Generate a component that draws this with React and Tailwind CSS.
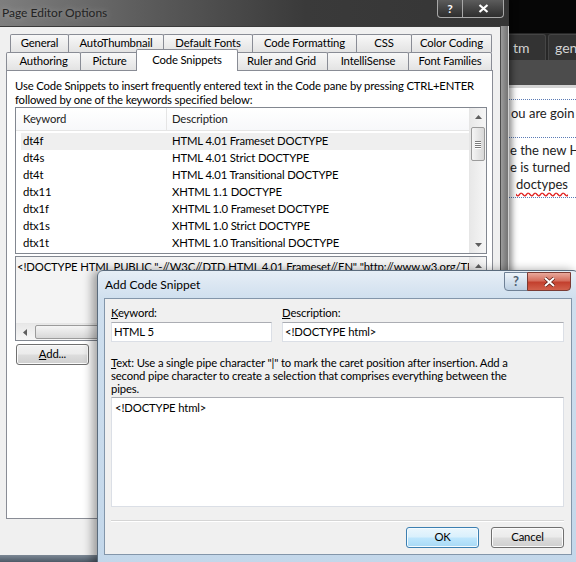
import React from 'react'

// Vista-style "Page Editor Options" with the "Add Code Snippet" dialog on top

const ui = "font-['Lato',sans-serif]"
const btnFace =
  'bg-[linear-gradient(#f2f2f2,#ebebeb_48%,#dddddd_52%,#cfcfcf)] border border-[#707070] rounded-[3px] shadow-[inset_0_0_0_1px_#fbfbfb]'
const btnDefault =
  'bg-[linear-gradient(#eaf6fd,#d9f0fc_48%,#bee6fd_52%,#a7d9f5)] border border-[#3c7fb1] rounded-[3px] shadow-[inset_0_0_0_1px_#f4fbff]'

const rows = [
  ['dt4f', 'HTML 4.01 Frameset DOCTYPE'],
  ['dt4s', 'HTML 4.01 Strict DOCTYPE'],
  ['dt4t', 'HTML 4.01 Transitional DOCTYPE'],
  ['dtx11', 'XHTML 1.1 DOCTYPE'],
  ['dtx1f', 'XHTML 1.0 Frameset DOCTYPE'],
  ['dtx1s', 'XHTML 1.0 Strict DOCTYPE'],
  ['dtx1t', 'XHTML 1.0 Transitional DOCTYPE'],
]

const tabsTop = [
  { label: 'General', w: 'w-[59px]', ml: '' },
  { label: 'AutoThumbnail', w: 'w-[96px]', ml: '-ml-px' },
  { label: 'Default Fonts', w: 'w-[90px]', ml: '-ml-px' },
  { label: 'Code Formatting', w: 'w-[105px]', ml: '-ml-px' },
  { label: 'CSS', w: 'w-[56px]', ml: '-ml-px' },
  { label: 'Color Coding', w: 'w-[81px]', ml: '-ml-px' },
]

const tabsBottom = [
  { label: 'Authoring', w: 'w-[75px]', ml: '' },
  { label: 'Picture', w: 'w-[59px]', ml: '-ml-px' },
  { label: 'Code Snippets', w: 'w-[102px]', ml: '-ml-[3px]', selected: true },
  { label: 'Ruler and Grid', w: 'w-[93px]', ml: '-ml-[3px]' },
  { label: 'IntelliSense', w: 'w-[82px]', ml: '-ml-px' },
  { label: 'Font Families', w: 'w-[84px]', ml: '-ml-px' },
]

function Arrow({ dir }) {
  const horiz = dir === 'left' || dir === 'right'
  const d = {
    up: 'M0 4L3.5 0L7 4Z',
    down: 'M0 0L3.5 4L7 0Z',
    left: 'M4 0L0 3.5L4 7Z',
    right: 'M0 0L4 3.5L0 7Z',
  }[dir]
  return (
    <svg width={horiz ? 4 : 7} height={horiz ? 7 : 4} viewBox={horiz ? '0 0 4 7' : '0 0 7 4'}>
      <path d={d} fill="#5e5e5e" />
    </svg>
  )
}

function Grip({ vertical }) {
  return (
    <div className={vertical ? 'flex flex-col gap-[1px]' : 'flex gap-[1px]'}>
      {[0, 1, 2, 3].map((i) => (
        <div
          key={i}
          className={vertical ? 'w-[6px] h-px bg-[#7a7a7a] shadow-[0_1px_0_#ffffff]' : 'w-px h-[6px] bg-[#7a7a7a] shadow-[1px_0_0_#ffffff]'}
        />
      ))}
    </div>
  )
}

function Tab({ label, w, ml, selected }) {
  if (selected) {
    return (
      <div className={`${w} ${ml} h-[22px] -mb-px relative z-10 bg-white border border-b-0 border-[#898c95] rounded-t-[2px] flex items-center justify-center pb-[1px]`}>
        {label}
      </div>
    )
  }
  return (
    <div className={`${w} ${ml} h-[18px] bg-linear-to-b from-[#f8f8f8] to-[#e3e3e3] border border-b-0 border-[#898c95] rounded-t-[2px] flex items-center justify-center`}>
      {label}
    </div>
  )
}

function Background() {
  return (
    <div className="flex flex-col h-full font-['Lato',sans-serif] tracking-normal">
      <div className="h-[33px] shrink-0 bg-[#060606]" />
      <div className="h-[27px] shrink-0 bg-[#272727] flex items-end pl-[505px] gap-[2px] overflow-hidden">
        <div className="h-[26px] w-[41px] shrink-0 bg-[#333333] border border-b-0 border-[#454545] rounded-t-[3px] text-[#d4d4d4] text-[14px] flex items-center pl-[7px]">
          tm
        </div>
        <div className="h-[26px] w-[60px] shrink-0 bg-[#333333] border border-b-0 border-[#454545] rounded-t-[3px] text-[#d4d4d4] text-[14px] flex items-center pl-[6px]">
          gen
        </div>
      </div>
      <div className="h-[25px] shrink-0 bg-[#4c4c4c]" />
      <div className="h-[3px] shrink-0 bg-[#d4d4d4]" />
      <div className="flex-1 bg-white text-[13px] text-[#222222] pt-[11px] whitespace-nowrap">
        <div className="h-[38px] border-t border-dotted border-[#5b7bb5] pt-[4px] leading-[18px]">
          <div className="ml-[511px]">ou are goin</div>
        </div>
        <div className="h-[61px] border-y border-dotted border-[#5b7bb5] pt-[4px] leading-[17px]">
          <div className="ml-[510px]">e the new H</div>
          <div className="ml-[510px]">e is turned</div>
          <div className="ml-[516px]">
            <span className="underline decoration-wavy decoration-[#e02020] underline-offset-[3px]">doctypes</span>
          </div>
        </div>
      </div>
    </div>
  )
}

function ListScroll() {
  return (
    <div className="w-[17px] shrink-0 flex flex-col bg-linear-to-r from-[#e8e8e8] to-[#f6f6f6] border-l border-[#e6e6e6]">
      <div className="h-[17px] flex items-center justify-center">
        <Arrow dir="up" />
      </div>
      <div className="flex-1 pt-[2px] px-[1px]">
        <div className="h-[34px] rounded-[2px] border border-[#9b9b9b] bg-linear-to-r from-[#f5f5f5] to-[#d8d8d8] flex items-center justify-center">
          <Grip vertical />
        </div>
      </div>
      <div className="h-[17px] flex items-center justify-center">
        <Arrow dir="down" />
      </div>
    </div>
  )
}

function SnippetList() {
  return (
    <div className="ml-[8px] w-[472px] h-[147px] shrink-0 border border-[#828790] bg-white flex">
      <div className="flex-1 flex flex-col">
        <div className="h-[23px] shrink-0 flex border-b border-[#e5e5e5] bg-linear-to-b from-[#ffffff] to-[#f7f8fa] text-[#222222]">
          <div className="w-[151px] border-r border-[#e5e5e5] pl-[7px] flex items-center">Keyword</div>
          <div className="flex-1 pl-[5px] flex items-center">Description</div>
        </div>
        <div className="pt-[2px]">
          {rows.map(([k, d], i) => (
            <div key={k} className={`h-[17px] ml-[5px] flex items-center ${i === 0 ? 'bg-[#efefef]' : ''}`}>
              <div className="w-[151px] pl-[2px]">{k}</div>
              <div className="flex-1">{d}</div>
            </div>
          ))}
        </div>
      </div>
      <ListScroll />
    </div>
  )
}

function Preview() {
  return (
    <div className="mt-[2px] ml-[8px] w-[472px] h-[85px] shrink-0 border border-[#828790] bg-[#f4f4f4] flex flex-col">
      <div className="flex-1 flex min-h-0">
        <div className="flex-1 overflow-hidden whitespace-nowrap pl-[1px] pt-[3px] leading-[14px]">
          {'<!DOCTYPE HTML PUBLIC "-//W3C//DTD HTML 4.01 Frameset//EN" "http://www.w3.org/TR/html4/frameset.dtd">'}
        </div>
        <div className="w-[17px] shrink-0 bg-linear-to-r from-[#e8e8e8] to-[#f6f6f6] border-l border-[#e6e6e6] flex flex-col">
          <div className="h-[17px] flex items-center justify-center">
            <Arrow dir="up" />
          </div>
        </div>
      </div>
      <div className="h-[17px] shrink-0 flex bg-linear-to-b from-[#e8e8e8] to-[#f6f6f6] border-t border-[#e6e6e6]">
        <div className="w-[17px] flex items-center justify-center">
          <Arrow dir="left" />
        </div>
        <div className="ml-[2px] w-[300px] my-[1px] rounded-[2px] border border-[#9b9b9b] bg-linear-to-b from-[#f5f5f5] to-[#d8d8d8] flex items-center justify-center">
          <Grip />
        </div>
        <div className="flex-1" />
        <div className="w-[17px] flex items-center justify-center">
          <Arrow dir="right" />
        </div>
      </div>
    </div>
  )
}

function PageEditorOptions() {
  return (
    <div className="absolute left-0 top-0 w-[509px] h-[562px] flex flex-col shadow-[3px_0_6px_rgba(0,0,0,0.45)]">
      <div className="h-[26px] shrink-0 flex items-start justify-between bg-[linear-gradient(90deg,#7e7e7e,#5a5a5a_30%,#3a3a3a_60%,#353535)]">
        <div className="pl-[2px] pt-[5px] leading-[16px] text-[12px] tracking-normal text-[#232323] [text-shadow:0_0_6px_rgba(255,255,255,0.35)]">
          Page Editor Options
        </div>
        <div className="flex mr-[5px]">
          <div className="w-[26px] h-[18px] border border-t-0 border-[#a8a8a8] rounded-bl-[4px] bg-linear-to-b from-[#5c5c5c] to-[#2e2e2e] flex items-center justify-center text-white text-[12px] font-bold">
            ?
          </div>
          <div className="w-[42px] h-[18px] -ml-px border border-t-0 border-[#a8a8a8] rounded-br-[4px] bg-linear-to-b from-[#5c5c5c] to-[#2e2e2e] flex items-center justify-center">
            <svg width="11" height="9" viewBox="0 0 11 9">
              <path d="M1.5 1L9.5 8M9.5 1L1.5 8" stroke="#ffffff" strokeWidth="2.2" />
            </svg>
          </div>
        </div>
      </div>
      <div className="flex-1 flex min-h-0">
        <div className="w-[500px] shrink-0 bg-[#f0f0f0] border-t border-[#3a3a3a] flex flex-col pt-[7px]">
          <div className="h-[18px] shrink-0 flex items-end pl-[10px]">
            {tabsTop.map((t) => (
              <Tab key={t.label} {...t} />
            ))}
          </div>
          <div className="h-[18px] shrink-0 flex items-end pl-[6px]">
            {tabsBottom.map((t) => (
              <Tab key={t.label} {...t} />
            ))}
          </div>
          <div className="ml-[6px] w-[487px] h-[449px] shrink-0 bg-white border border-[#898c95] flex flex-col">
            <p className="pt-[8px] pl-[8px] leading-[14px] whitespace-nowrap">
              Use Code Snippets to insert frequently entered text in the Code pane by pressing CTRL+ENTER
              <br />
              followed by one of the keywords specified below:
            </p>
            <SnippetList />
            <Preview />
            <button className={`mt-[3px] ml-[9px] w-[73px] h-[21px] shrink-0 ${btnFace} flex items-center justify-center`}>
              <span>
                <span className="underline">A</span>dd...
              </span>
            </button>
          </div>
        </div>
        <div className="flex-1 border-l border-[#4a4a4a] border-r border-r-[#d0d0d0] bg-linear-to-r from-[#9c9c9c] to-[#737373]" />
      </div>
      <div className="h-[7px] shrink-0 bg-linear-to-b from-[#7d8996] to-[#4e5a67]" />
    </div>
  )
}

function AddSnippet() {
  return (
    <div className="absolute left-[97px] top-[270px] w-[482px] h-[300px] border border-[#5a6b7c] rounded-t-[6px] bg-[linear-gradient(#e6eef6,#cfdfee_28px,#c3d7ea)] px-[6px] shadow-[-5px_0_10px_rgba(0,0,0,0.35)]">
      <div className="h-[27px] flex items-start justify-between">
        <div className="pl-[1px] pt-[6px] leading-[16px] text-[12px] tracking-normal text-black">Add Code Snippet</div>
        <div className="flex mt-[1px] mr-[1px]">
          <div className="w-[24px] h-[19px] border border-[#6f8196] rounded-bl-[4px] bg-linear-to-b from-[#eef4fa] to-[#bccfe2] flex items-center justify-center text-[#4f5f70] text-[13px] font-bold">
            ?
          </div>
          <div className="w-[44px] h-[19px] -ml-px border border-[#7a3b34] rounded-br-[4px] bg-[linear-gradient(#e9a99c,#d56e5d_45%,#c3402e_55%,#d2614c)] flex items-center justify-center">
            <svg width="13" height="10" viewBox="0 0 13 10">
              <path d="M2 1L11 9M11 1L2 9" stroke="#5a1c14" strokeWidth="3.4" />
              <path d="M2 1L11 9M11 1L2 9" stroke="#ffffff" strokeWidth="2" />
            </svg>
          </div>
        </div>
      </div>
      <div className="h-[257px] border border-[#8396aa] bg-[#f0f0f0] flex flex-col pt-[7px] pl-[6px] pr-[7px]">
        <div className="flex gap-[10px]">
          <div className="w-[161px] shrink-0">
            <div className="leading-[14px]">
              <span className="underline">K</span>eyword:
            </div>
            <div className="mt-[2px] h-[20px] bg-white border border-[#dbdfe6] border-t-[#abadb3] pl-[2px] flex items-center">HTML 5</div>
          </div>
          <div className="flex-1">
            <div className="leading-[14px]">
              <span className="underline">D</span>escription:
            </div>
            <div className="mt-[2px] h-[20px] bg-white border border-[#dbdfe6] border-t-[#abadb3] pl-[2px] flex items-center">
              {'<!DOCTYPE html>'}
            </div>
          </div>
        </div>
        <p className="mt-[14px] leading-[13px] whitespace-nowrap">
          <span className="underline">T</span>ext: Use a single pipe character "|" to mark the caret position after insertion. Add a
          <br />
          second pipe character to create a selection that comprises everything between the
          <br />
          pipes.
        </p>
        <div className="mt-[2px] h-[110px] shrink-0 bg-white border border-[#dbdfe6] border-t-[#abadb3] pl-[3px] pt-[3px] leading-[14px]">
          {'<!DOCTYPE html>'}
        </div>
        <div className="mt-[13px] h-px bg-[#d5d5d5]" />
        <div className="h-px bg-white" />
        <div className="mt-[5px] flex justify-end gap-[12px]">
          <button className={`w-[73px] h-[21px] ${btnDefault} flex items-center justify-center`}>OK</button>
          <button className={`w-[73px] h-[21px] ${btnFace} flex items-center justify-center`}>Cancel</button>
        </div>
      </div>
    </div>
  )
}

export default function App() {
  return (
    <div className={`relative w-[576px] h-[562px] overflow-hidden bg-white ${ui} text-[11.3px] tracking-[-0.15px] text-black`}>
      <Background />
      <PageEditorOptions />
      <AddSnippet />
    </div>
  )
}
